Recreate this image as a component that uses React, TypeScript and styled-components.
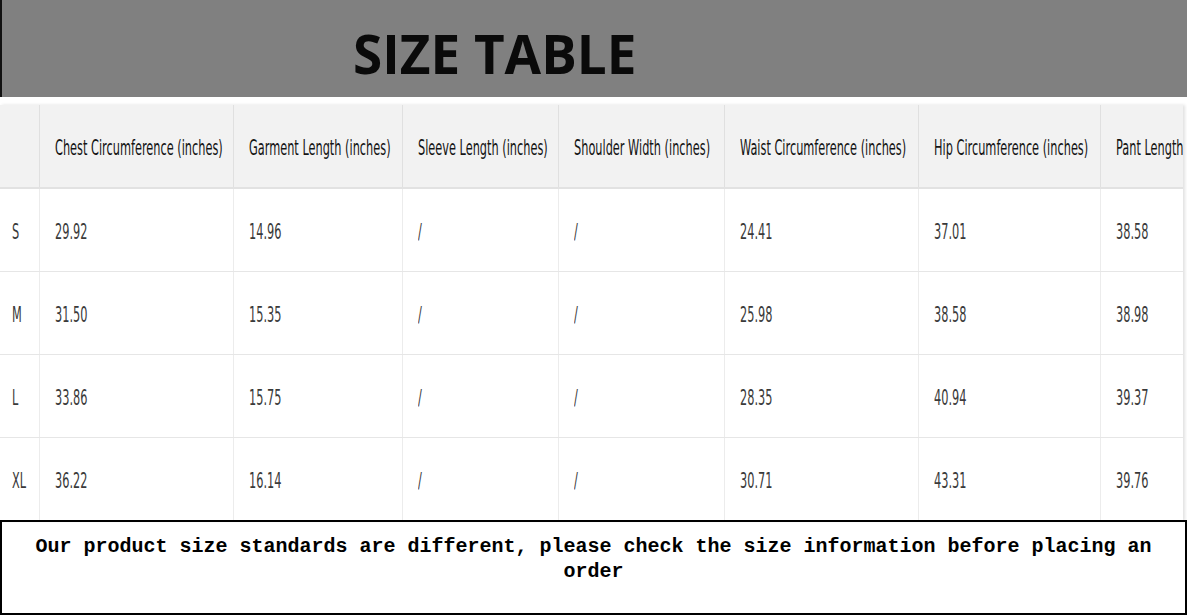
import React from "react";
import styled, { createGlobalStyle } from "styled-components";

const GlobalStyle = createGlobalStyle`
  html, body {
    margin: 0;
    padding: 0;
    background: #fff;
  }
`;

const headers = [
  "Chest Circumference (inches)",
  "Garment Length (inches)",
  "Sleeve Length (inches)",
  "Shoulder Width (inches)",
  "Waist Circumference (inches)",
  "Hip Circumference (inches)",
  "Pant Length",
];

const rows: string[][] = [
  ["S", "29.92", "14.96", "/", "/", "24.41", "37.01", "38.58"],
  ["M", "31.50", "15.35", "/", "/", "25.98", "38.58", "38.98"],
  ["L", "33.86", "15.75", "/", "/", "28.35", "40.94", "39.37"],
  ["XL", "36.22", "16.14", "/", "/", "30.71", "43.31", "39.76"],
];

const columns = "39px 194px 169px 156px 166px 194px 182px 83px";

const App: React.FC = () => {
  return (
    <Page>
      <GlobalStyle />
      <Banner>
        <Title>SIZE TABLE</Title>
      </Banner>
      <TableWrap>
        <Row header>
          <Cell header />
          {headers.map((h) => (
            <Cell header key={h}>
              <Label>{h}</Label>
            </Cell>
          ))}
        </Row>
        {rows.map((r) => (
          <Row key={r[0]}>
            {r.map((v, i) => (
              <Cell key={i} first={i === 0}>
                <Label>{v}</Label>
              </Cell>
            ))}
          </Row>
        ))}
      </TableWrap>
      <Notice>
        Our product size standards are different, please check the size
        information before placing an order
      </Notice>
    </Page>
  );
};

const Page = styled.div`
  width: 1187px;
  height: 615px;
  overflow: hidden;
  display: flex;
  flex-direction: column;
`;

const Banner = styled.div`
  height: 97px;
  flex-shrink: 0;
  background: #808080;
  border-left: 2px solid #111;
  box-sizing: border-box;
  padding-left: 351px;
  display: flex;
  align-items: center;
`;

const Title = styled.h1`
  margin: 10px 0 0 0;
  font-family: "Open Sans", "DejaVu Sans", sans-serif;
  font-weight: 700;
  font-size: 53px;
  color: #0a0a0a;
`;

const TableWrap = styled.div`
  margin-top: 8px;
  width: 1183px;
  box-shadow: 2px 0 3px rgba(0, 0, 0, 0.12);
  overflow: hidden;
`;

const Row = styled.div<{ header?: boolean }>`
  display: grid;
  grid-template-columns: ${columns};
  height: ${(p) => (p.header ? "84px" : "83px")};
  background: ${(p) => (p.header ? "#f2f2f2" : "#fff")};
  border-bottom: ${(p) => (p.header ? "2px solid #e2e2e2" : "1px solid #e6e6e6")};
  box-sizing: border-box;
`;

const Cell = styled.div<{ header?: boolean; first?: boolean }>`
  display: flex;
  align-items: center;
  padding-left: ${(p) => (p.first ? "12px" : "15px")};
  padding-top: 4px;
  border-left: 1px solid ${(p) => (p.header ? "#e0e0e0" : "#ececec")};
  &:first-child {
    border-left: none;
  }
  font-family: "DejaVu Sans Condensed", "DejaVu Sans", sans-serif;
  font-stretch: condensed;
  font-size: 21px;
  color: ${(p) => (p.header ? "#151515" : "#3a3a3a")};
  white-space: nowrap;
  overflow: hidden;
`;

const Label = styled.span`
  display: inline-block;
  transform: scaleX(0.6);
  transform-origin: left center;
`;

const Notice = styled.div`
  margin-top: -1px;
  height: 95px;
  flex-shrink: 0;
  border: 2px solid #000;
  box-sizing: border-box;
  padding: 12px 30px 0;
  text-align: center;
  font-family: "Liberation Mono", "DejaVu Sans Mono", monospace;
  font-weight: 700;
  font-size: 20px;
  line-height: 25px;
  color: #000;
`;

export default App;
